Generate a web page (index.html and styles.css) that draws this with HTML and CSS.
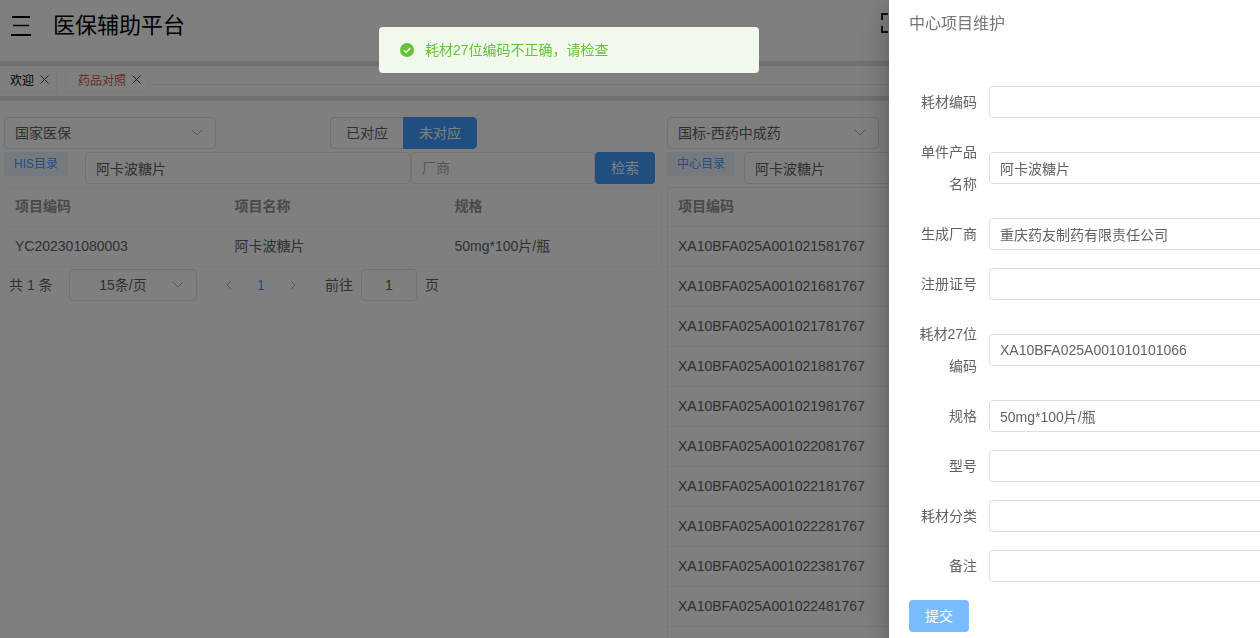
FILE: index.html
```html
<!DOCTYPE html>
<html lang="zh-CN">
<head>
<meta charset="utf-8">
<title>医保辅助平台</title>
<link rel="stylesheet" href="styles.css">
</head>
<body>
<div class="app">
  <header class="topbar">
    <button class="icon-btn" type="button" aria-label="菜单">
      <svg width="22" height="20" viewBox="0 0 22 20" stroke="#000" stroke-width="2"><path d="M2 1h18M1 19h20"/><path d="M3 9.500h16" stroke-width="1.500"/></svg>
    </button>
    <h1 class="brand">医保辅助平台</h1>
    <button class="icon-btn fullscreen" type="button" aria-label="全屏">
      <svg width="20" height="20" viewBox="0 0 20 20" fill="none" stroke="#222" stroke-width="2"><path d="M1 7V1h6M13 1h6v6M19 13v6h-6M7 19H1v-6"/></svg>
    </button>
  </header>

  <nav class="tabs">
    <div class="tab"><a href="#welcome">欢迎</a><button class="tab-close" type="button" aria-label="关闭欢迎"><svg width="9" height="9" viewBox="0 0 9 9" stroke="#444"><path d="M.5.5l8 8M8.500.5l-8 8"/></svg></button></div>
    <div class="tab active"><a href="#drugs">药品对照</a><button class="tab-close" type="button" aria-label="关闭药品对照"><svg width="9" height="9" viewBox="0 0 9 9" stroke="#444"><path d="M.5.5l8 8M8.500.5l-8 8"/></svg></button></div>
    <span class="tab-rail"></span>
  </nav>

  <main class="panels">
    <section class="panel left">
      <div class="row filter">
        <div class="select"><select aria-label="医保类型"><option>国家医保</option></select><svg class="chevron" width="12" height="8" viewBox="0 0 12 8"><path d="M1 1l5 5 5-5"/></svg></div>
        <div class="segmented"><button type="button">已对应</button><button type="button" class="on">未对应</button></div>
      </div>
      <div class="row search">
        <div class="tag-cell"><span class="tag">HIS目录</span></div>
        <input class="field name" type="text" value="阿卡波糖片" aria-label="项目名称">
        <input class="field maker" type="text" placeholder="厂商" aria-label="厂商">
        <button class="btn primary" type="button">检索</button>
      </div>
      <table class="grid">
        <thead><tr><th>项目编码</th><th>项目名称</th><th>规格</th></tr></thead>
        <tbody><tr><td>YC202301080003</td><td>阿卡波糖片</td><td>50mg*100片/瓶</td></tr></tbody>
      </table>
      <div class="pager">
        <span class="total">共 1 条</span>
        <div class="select size"><select aria-label="每页条数"><option>15条/页</option></select><svg class="chevron" width="12" height="8" viewBox="0 0 12 8"><path d="M1 1l5 5 5-5"/></svg></div>
        <button class="page" type="button" aria-label="上一页"><svg width="6" height="10" viewBox="0 0 6 10"><path d="M5 1L1 5l4 4"/></svg></button>
        <button class="page current" type="button">1</button>
        <button class="page" type="button" aria-label="下一页"><svg width="6" height="10" viewBox="0 0 6 10"><path d="M1 1l4 4-4 4"/></svg></button>
        <label class="jump">前往<input class="field" type="text" value="1">页</label>
      </div>
    </section>

    <section class="panel right">
      <div class="row filter">
        <div class="select"><select aria-label="目录类型"><option>国标-西药中成药</option></select><svg class="chevron" width="12" height="8" viewBox="0 0 12 8"><path d="M1 1l5 5 5-5"/></svg></div>
      </div>
      <div class="row search">
        <div class="tag-cell"><span class="tag">中心目录</span></div>
        <input class="field name" type="text" value="阿卡波糖片" aria-label="中心项目名称">
      </div>
      <div class="grid-box">
        <table class="grid">
          <thead><tr><th>项目编码</th></tr></thead>
          <tbody>
            <tr><td>XA10BFA025A001021581767</td></tr>
            <tr><td>XA10BFA025A001021681767</td></tr>
            <tr><td>XA10BFA025A001021781767</td></tr>
            <tr><td>XA10BFA025A001021881767</td></tr>
            <tr><td>XA10BFA025A001021981767</td></tr>
            <tr><td>XA10BFA025A001022081767</td></tr>
            <tr><td>XA10BFA025A001022181767</td></tr>
            <tr><td>XA10BFA025A001022281767</td></tr>
            <tr><td>XA10BFA025A001022381767</td></tr>
            <tr><td>XA10BFA025A001022481767</td></tr>
          </tbody>
        </table>
      </div>
    </section>
  </main>
</div>

<div class="mask"></div>

<aside class="drawer" role="dialog" aria-labelledby="drawer-title">
  <h2 class="drawer-title" id="drawer-title">中心项目维护</h2>
  <form class="form">
    <div class="item"><label for="f1">耗材编码</label><input class="field" id="f1" type="text"></div>
    <div class="item"><label for="f2">单件产品名称</label><input class="field" id="f2" type="text" value="阿卡波糖片"></div>
    <div class="item"><label for="f3">生成厂商</label><input class="field" id="f3" type="text" value="重庆药友制药有限责任公司"></div>
    <div class="item"><label for="f4">注册证号</label><input class="field" id="f4" type="text"></div>
    <div class="item"><label for="f5">耗材27位编码</label><input class="field" id="f5" type="text" value="XA10BFA025A001010101066"></div>
    <div class="item"><label for="f6">规格</label><input class="field" id="f6" type="text" value="50mg*100片/瓶"></div>
    <div class="item"><label for="f7">型号</label><input class="field" id="f7" type="text"></div>
    <div class="item"><label for="f8">耗材分类</label><input class="field" id="f8" type="text"></div>
    <div class="item"><label for="f9">备注</label><input class="field" id="f9" type="text"></div>
    <button class="btn submit" type="button">提交</button>
  </form>
</aside>

<div class="toast" role="alert">
  <svg width="14" height="14" viewBox="0 0 14 14"><circle cx="7" cy="7" r="7" fill="#67c23a"/><path d="M3.800 7.200l2.200 2.200 4.300-4.300" fill="none" stroke="#f0f9eb" stroke-width="1.400"/></svg>
  <span>耗材27位编码不正确，请检查</span>
</div>
</body>
</html>
```
FILE: styles.css
```css
* { box-sizing: border-box; }

body {
  margin: 0;
  background: #fff;
  color: #606266;
  font: 14px/20px "Liberation Sans", "Noto Sans CJK SC", sans-serif;
}

button, input, select { font: inherit; color: inherit; margin: 0; }
button { border: 0; background: none; padding: 0; cursor: pointer; }
h1, h2 { margin: 0; font-weight: 400; }
svg { display: block; flex: none; }

.app {
  display: flex;
  flex-direction: column;
  height: 100vh;
  overflow: hidden;
}

/* Top bar */
.topbar {
  display: flex;
  align-items: flex-start;
  flex: none;
  height: 66px;
  padding: 10px 359px 0 10px;
  border-bottom: 5px solid #e0e0e0;
}
.topbar .icon-btn { margin-top: 6px; }
.topbar .fullscreen { margin: 3px 0 0 auto; }
.brand {
  margin-left: 21px;
  color: #000;
  font-size: 22px;
  line-height: 32px;
}

/* Tabs */
.tabs {
  display: flex;
  align-items: center;
  flex: none;
  height: 35px;
  border-bottom: 5px solid #e0e0e0;
  font-size: 12px;
}
.tab {
  display: flex;
  align-items: center;
  gap: 6px;
  height: 24px;
  padding: 0 7px 0 10px;
  border: 1px solid #f4f4f4;
  border-left: 0;
}
.tab a { color: #000; text-decoration: none; }
.tab.active { margin-left: 8px; padding-left: 12px; border-left: 1px solid #f4f4f4; }
.tab.active a { color: #cc5a46; }
.tab-close { padding-bottom: 3px; }
.tab-rail { flex: 1; margin-top: 6px; border-top: 1px solid #f0f0f0; }

/* Panels */
.panels {
  display: grid;
  grid-template-columns: 658fr 580fr;
  gap: 5px;
  flex: 1;
  padding: 16px 13px 0 4px;
}
.panel { display: flex; flex-direction: column; min-width: 0; }
.row { display: flex; align-items: center; margin-bottom: 3px; }

.field {
  height: 32px;
  min-width: 0;
  padding: 0 10px;
  border: 1px solid #dcdfe6;
  border-radius: 4px;
  background: #fff;
  outline: 0;
}
.field::placeholder { color: #a8abb2; opacity: 1; }
.app .field, .app .select select { border-color: #e2e4ea; }

.select { position: relative; width: 212px; }
.select select {
  display: block;
  width: 100%;
  height: 32px;
  padding: 0 30px 0 10px;
  border: 1px solid #dcdfe6;
  border-radius: 4px;
  background: #fff;
  appearance: none;
}
.chevron { position: absolute; right: 13px; top: 12px; }
.chevron path, .page path { fill: none; stroke: #a8abb2; }

.segmented { display: flex; margin-left: 114px; }
.segmented button {
  height: 32px;
  padding: 0 15px;
  border: 1px solid #dcdfe6;
  border-radius: 4px 0 0 4px;
}
.segmented .on {
  margin-left: -1px;
  border-color: #409eff;
  border-radius: 0 4px 4px 0;
  background: #409eff;
  color: #fff;
}

.search { padding-right: 7px; }
.tag-cell { align-self: flex-start; flex: none; width: 81px; }
.right .tag-cell { width: 77px; }
.tag {
  display: inline-block;
  height: 24px;
  padding: 0 10px;
  border-radius: 4px;
  background: #ecf5ff;
  color: #409eff;
  font-size: 12px;
  line-height: 24px;
}
.name { flex: 304; }
.maker { flex: 162; }
.btn { flex: none; width: 60px; height: 32px; border-radius: 4px; color: #fff; }
.primary { background: #409eff; }

/* Tables */
.grid {
  width: 100%;
  border: 1px solid #ebeef5;
  border-collapse: collapse;
  table-layout: fixed;
}
.grid th, .grid td {
  height: 40px;
  padding: 0 10px 2px;
  border-bottom: 1px solid #ebeef5;
  text-align: left;
  font-weight: 400;
}
.grid th { height: 39px; color: #909399; font-weight: 700; }
.left .grid, .left .grid th, .left .grid td { border-color: #f5f6f9; }
.left .grid th { width: 220px; }
.left .grid th:last-child { width: auto; }
.grid-box { flex: 1; border-left: 1px solid #ebeef5; }
.grid-box .grid { border-left: 0; }

/* Pagination */
.pager { display: flex; align-items: center; padding: 2px 0 0 5px; }
.total { width: 60px; }
.size { width: 128px; margin-right: 16px; }
.size select { padding: 0 20px 0 0; text-align: center; text-align-last: center; }
.page { display: flex; justify-content: center; align-items: center; width: 32px; height: 32px; }
.current { color: #409eff; }
.jump { display: flex; align-items: center; gap: 8px; margin-left: 16px; }
.jump .field { width: 56px; text-align: center; }

/* Overlay layers */
.mask { position: fixed; inset: 0; background: rgba(0, 0, 0, .5); }

.drawer {
  position: fixed;
  top: 0;
  right: 0;
  bottom: 0;
  width: 371px;
  padding: 14px 0 0 20px;
  overflow: hidden;
  background: #fff;
  box-shadow: 0 8px 10px -5px rgba(0, 0, 0, .2), 0 16px 24px 2px rgba(0, 0, 0, .14), 0 6px 30px 5px rgba(0, 0, 0, .12);
}
.drawer-title { margin-bottom: 52px; color: #72767b; font-size: 16px; line-height: 20px; }
.form { margin-right: -10px; }
.item { display: flex; align-items: center; margin-bottom: 18px; }
.item label { flex: none; width: 80px; padding-right: 12px; line-height: 32px; text-align: right; }
.item .field { flex: 1; }
.submit { background: #79bbff; }

.toast {
  position: fixed;
  top: 27px;
  left: 50%;
  display: flex;
  align-items: center;
  gap: 11px;
  width: 380px;
  height: 46px;
  margin-left: -251px;
  padding: 0 21px;
  border-radius: 4px;
  background: #f0f9eb;
  color: #67c23a;
}
```
